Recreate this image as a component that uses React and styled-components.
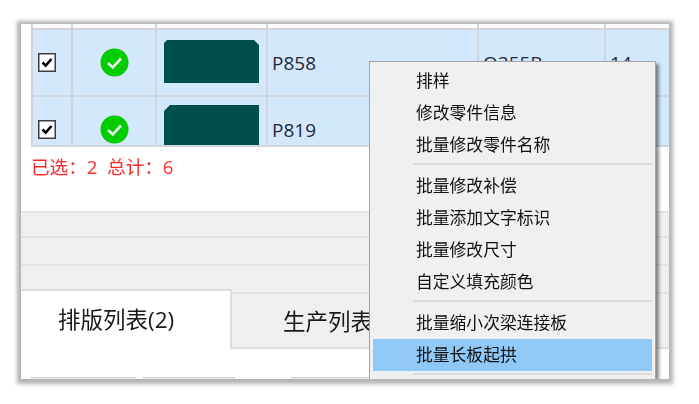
import React from 'react';
import styled, { createGlobalStyle } from 'styled-components';

const GlobalStyle = createGlobalStyle`
  html, body {
    margin: 0;
    background: #fff;
    font-family: "Open Sans", "Noto Sans CJK SC", sans-serif;
  }
`;

const Page = styled.div`
  width: 699px;
  height: 404px;
  box-sizing: border-box;
  padding: 24px 30px 25px 21px;
  overflow: hidden;
  filter: blur(0.35px);
`;

const Frame = styled.div`
  position: relative;
  height: 100%;
  background: #fff;
  box-shadow: 0 1px 4px 4px rgba(0, 0, 0, 0.3);
`;

const Clip = styled.div`
  position: relative;
  height: 100%;
  overflow: hidden;
  display: flex;
  flex-direction: column;
`;

const TableWrap = styled.div`
  flex: none;
  height: 121px;
  margin-left: 10px;
  overflow: hidden;
  border-bottom: 2px solid #d3d6da;
`;

const Row = styled.div`
  display: grid;
  grid-template-columns: 40px 84px 111px 211px 127px 1fr;
  height: ${(p) => p.$height}px;
  box-sizing: border-box;
  background: ${(p) => (p.$selected ? '#d4e8fc' : '#fff')};
  border-bottom: 2px solid #d0d5dc;
`;

const Cell = styled.div`
  display: flex;
  align-items: center;
  justify-content: ${(p) => (p.$center ? 'center' : 'flex-start')};
  padding-left: ${(p) => (p.$center ? 0 : p.$pad || 4)}px;
  border-left: 2px solid #d0d5dc;
  font-size: 19px;
  color: #1f2a38;
  overflow: hidden;
  white-space: nowrap;
`;

const Thumb = styled.svg`
  display: block;
  flex: none;
  margin-left: 3px;
  margin-top: ${(p) => p.$offset}px;
`;

const Status = styled.div`
  flex: none;
  height: 64px;
  box-sizing: border-box;
  padding: 6px 0 0 10px;
  font-size: 18.6px;
  line-height: 28px;
  color: #ff2a2a;
  white-space: pre;
`;

const Band = styled.div`
  flex: none;
  height: ${(p) => p.$height}px;
  box-sizing: border-box;
  background: #efefef;
  border-top: 2px solid #e3e3e3;
`;

const TabBar = styled.div`
  flex: none;
  display: flex;
  height: 60px;
  margin-top: -3px;
`;

const ActiveTab = styled.div`
  width: 211px;
  box-sizing: border-box;
  padding: 12px 0 0 37px;
  background: #fff;
  border-top: 2px solid #e0e0e0;
  border-right: 2px solid #dcdcdc;
  font-size: 22.5px;
  line-height: 34px;
  color: #1a1a1a;
`;

const Tab = styled.div`
  flex: 1;
  margin-top: 3px;
  box-sizing: border-box;
  padding: 11px 0 0 51px;
  background: #efefef;
  border-top: 2px solid #e3e3e3;
  border-bottom: 2px solid #dedede;
  font-size: 22.5px;
  line-height: 34px;
  color: #1a1a1a;
  white-space: nowrap;
`;

const Toolbar = styled.div`
  flex: none;
  display: flex;
  padding: 28px 0 0 10px;
`;

const ToolButton = styled.div`
  flex: none;
  width: ${(p) => p.$width}px;
  height: 20px;
  margin-right: ${(p) => p.$gap}px;
  box-sizing: border-box;
  background: #f2f2f2;
  border: 1px solid #d0d0d0;
`;

const Menu = styled.div`
  position: absolute;
  left: 348px;
  top: 37px;
  width: 287px;
  height: 340px;
  box-sizing: border-box;
  padding: 3px 3px 0;
  background: #f0f0f0;
  border: 1px solid #a4a4a4;
  box-shadow: 3px 3px 3px rgba(0, 0, 0, 0.45);
`;

const MenuItem = styled.div`
  height: 32px;
  box-sizing: border-box;
  padding-left: 43px;
  font-size: 16.8px;
  line-height: 32px;
  color: #111;
  white-space: nowrap;
  background: ${(p) => (p.$active ? '#90c8f6' : 'transparent')};
`;

const MenuSep = styled.div`
  height: 2px;
  margin: 2px 0 5px 40px;
  background: #dadada;
`;

const Check = () => (
  <svg width="18" height="19" viewBox="0 0 18 19">
    <rect x="0.75" y="0.75" width="16.5" height="17.5" fill="#fff" stroke="#3a3f46" strokeWidth="1.5" />
    <path d="M4.5 9.5 L7.7 12.6 L13.5 6" fill="none" stroke="#000" strokeWidth="2.6" />
  </svg>
);

const Ok = () => (
  <svg width="29" height="29" viewBox="0 0 29 29">
    <circle cx="14.5" cy="14.5" r="14" fill="#00cc00" />
    <path d="M8 15 L12.8 19.5 L21 10.5" fill="none" stroke="#e8f8e8" strokeWidth="2.6" />
  </svg>
);

const rows = [
  { id: 'P858', thumb: '3,0 90,0 95,5 95,43 0,43 0,3', h: 43, offset: -2, material: 'Q355B', qty: '14' },
  { id: 'P819', thumb: '6,0 95,0 95,52 0,52 0,6', h: 52, offset: 3 },
];

const menu = [
  ['排样', '修改零件信息', '批量修改零件名称'],
  ['批量修改补偿', '批量添加文字标识', '批量修改尺寸', '自定义填充颜色'],
  ['批量缩小次梁连接板', '批量长板起拱'],
];

export default function App() {
  return (
    <Page>
      <GlobalStyle />
      <Frame>
        <Clip>
          <TableWrap>
            <Row $height={6}>
              {[0, 1, 2, 3, 4, 5].map((i) => <Cell key={i} />)}
            </Row>
            {rows.map((r) => (
              <Row key={r.id} $height={67} $selected>
                <Cell $pad={5}><Check /></Cell>
                <Cell $center><Ok /></Cell>
                <Cell>
                  <Thumb $offset={r.offset} width="95" height={r.h} viewBox={`0 0 95 ${r.h}`}>
                    <polygon points={r.thumb} fill="#004f4f" />
                  </Thumb>
                </Cell>
                <Cell>{r.id}</Cell>
                <Cell>{r.material}</Cell>
                <Cell>{r.qty}</Cell>
              </Row>
            ))}
          </TableWrap>
          <Status>已选：2  总计：6</Status>
          <Band $height={25} />
          <Band $height={28} />
          <Band $height={28} />
          <TabBar>
            <ActiveTab>排版列表(2)</ActiveTab>
            <Tab>生产列表</Tab>
          </TabBar>
          <Toolbar>
            <ToolButton $width={105} $gap={7} />
            <ToolButton $width={92} $gap={56} />
            <ToolButton $width={140} $gap={0} />
          </Toolbar>
          <Menu>
            {menu.map((group, i) => (
              <React.Fragment key={i}>
                {group.map((label) => (
                  <MenuItem key={label} $active={label === '批量长板起拱'}>{label}</MenuItem>
                ))}
                <MenuSep />
              </React.Fragment>
            ))}
          </Menu>
        </Clip>
      </Frame>
    </Page>
  );
}
